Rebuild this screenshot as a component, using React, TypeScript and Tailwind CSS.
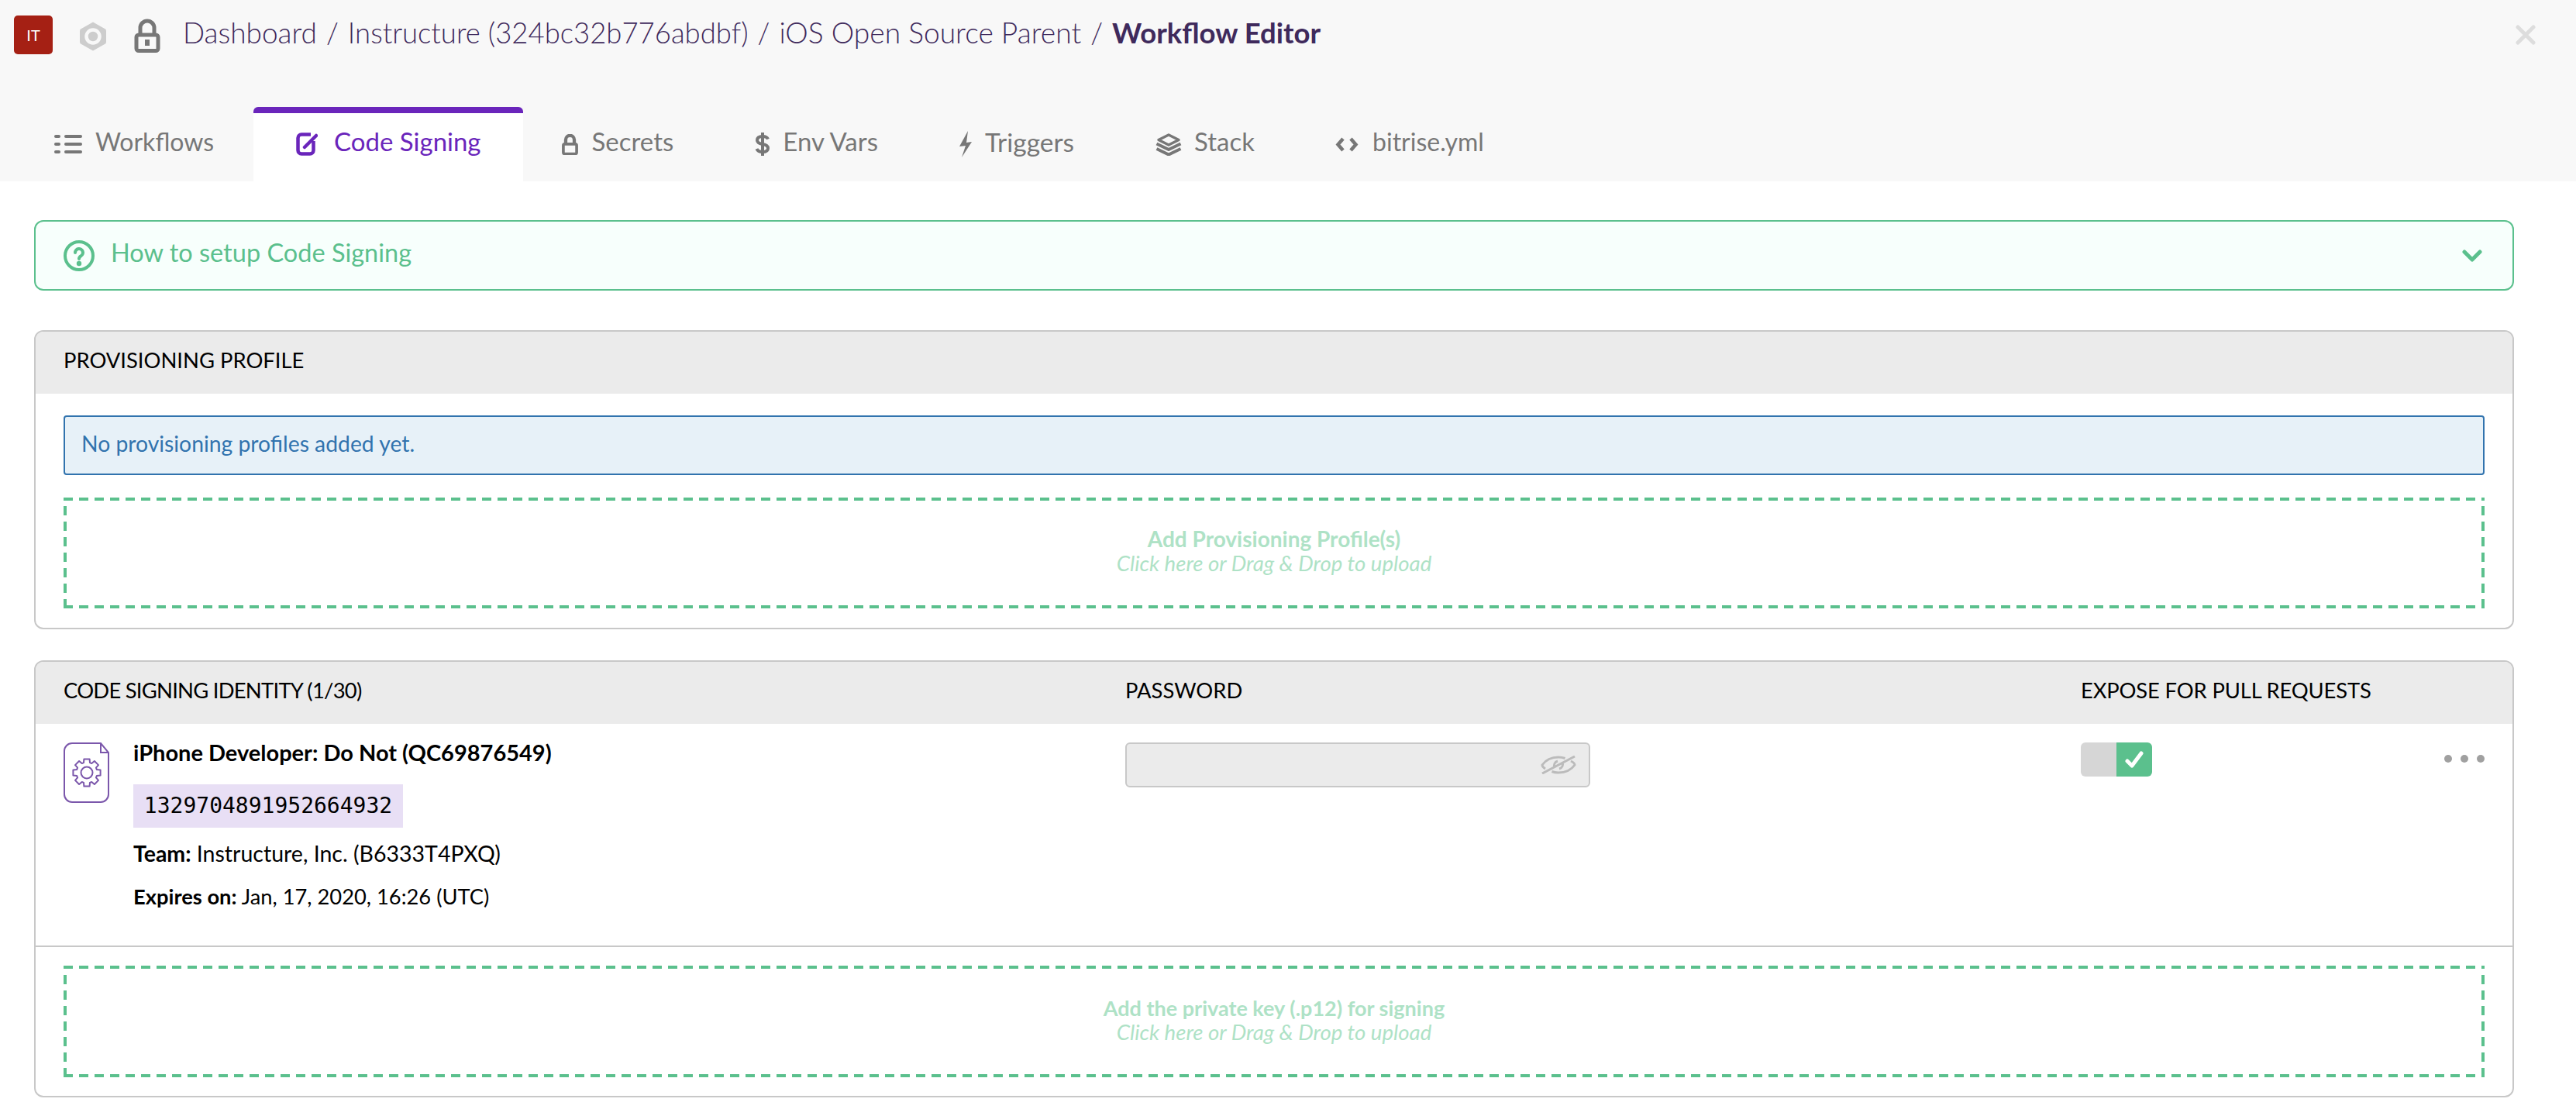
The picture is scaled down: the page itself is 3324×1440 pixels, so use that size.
import type { ReactNode } from "react";

const GREEN = "#5bc08d";

// gear outline for the certificate file icon
const GEAR = Array.from({ length: 8 }, (_, i) => {
  const a = (i / 8) * Math.PI * 2;
  const pt = (r: number, o: number) =>
    `${(30 + r * Math.cos(a + o)).toFixed(1)},${(39 + r * Math.sin(a + o)).toFixed(1)}`;
  return `${pt(13.5, -0.3)} ${pt(18, -0.2)} ${pt(18, 0.2)} ${pt(13.5, 0.3)}`;
}).join(" ");

function HexIcon() {
  return (
    <svg width="36" height="40" viewBox="0 0 36 40" className="ml-[34px]">
      <path d="M18 1.5 33 10a3 3 0 0 1 2 3v14a3 3 0 0 1-2 3l-15 8.500L3 30a3 3 0 0 1-2-3V13a3 3 0 0 1 2-3z" fill="#cdcdcd" />
      <circle cx="18" cy="20" r="8.500" fill="none" stroke="#f8f8f8" strokeWidth="4.500" />
    </svg>
  );
}

function LockIcon({ w, h, keyhole }: { w: number; h: number; keyhole?: boolean }) {
  return (
    <svg width={w} height={h} viewBox="0 0 34 44">
      <path d="M8 19v-7a9 9 0 0 1 18 0v7" fill="none" stroke="#777" strokeWidth={keyhole ? 5 : 7} />
      <rect x="3" y="21" width="28" height="20.500" rx="3" fill="none" stroke="#777" strokeWidth={keyhole ? 5 : 6} />
      {keyhole && <rect x="14" y="27" width="6" height="8" fill="#777" />}
    </svg>
  );
}

function ListIcon() {
  return (
    <svg width="36" height="24" viewBox="0 0 36 24" fill="#777">
      <rect x="0" y="0" width="8" height="4" rx="2" />
      <rect x="13" y="0" width="23" height="4" rx="2" />
      <rect x="0" y="10" width="8" height="4" rx="2" />
      <rect x="13" y="10" width="23" height="4" rx="2" />
      <rect x="0" y="20" width="8" height="4" rx="2" />
      <rect x="13" y="20" width="23" height="4" rx="2" />
    </svg>
  );
}

function SigningIcon() {
  return (
    <svg width="28" height="30" viewBox="0 0 28 30" fill="none" stroke="#6a25bb" strokeWidth="4.500">
      <path d="M19 2.500H7A4.500 4.500 0 0 0 2.500 7v16A4.500 4.500 0 0 0 7 27.500h11a4.500 4.500 0 0 0 4.500-4.500V11" />
      <path d="M11 19 26 4" strokeLinecap="round" />
    </svg>
  );
}

function DollarIcon() {
  return (
    <svg width="20" height="32" viewBox="0 0 20 32" fill="none" stroke="#777" strokeWidth="4">
      <path d="M17 9.500C16 7 13.500 6 10 6 6 6 3 7.500 3 11s3 4.300 7 5 7 1.800 7 5.200S14 26 10 26c-3.800 0-6.500-1.300-7.500-4" />
      <path d="M10 1v30" />
    </svg>
  );
}

function BoltIcon() {
  return (
    <svg width="16" height="34" viewBox="0 0 16 34" fill="#777">
      <path d="M11 0 0 20l8-1-5 15 13-20-7 1z" />
    </svg>
  );
}

function StackIcon() {
  return (
    <svg width="34" height="29" viewBox="0 0 34 29" fill="none" stroke="#777" strokeWidth="3.500" strokeLinejoin="round">
      <path d="M17 2 30 8.500 17 15 4 8.500z" />
      <path d="M1.500 13.500 17 21l15.500-7.500" strokeWidth="4" />
      <path d="M1.500 20 17 27.500 32.500 20" strokeWidth="4" />
    </svg>
  );
}

function CodeIcon() {
  return (
    <svg width="30" height="19" viewBox="0 0 30 19" fill="none" stroke="#777" strokeWidth="4.500">
      <path d="M10 2 3.500 9.500 10 17" />
      <path d="M20 2l6.500 7.500L20 17" />
    </svg>
  );
}

const TABS: { label: string; icon: ReactNode; cls: string }[] = [
  { label: "Workflows", icon: <ListIcon />, cls: "gap-[17px] pl-[50px] pr-[51px] text-[32px]" },
  { label: "Code Signing", icon: <SigningIcon />, cls: "gap-[21px] pl-[55px] pr-[54px] text-[33px]" },
  { label: "Secrets", icon: <LockIcon w={21} h={27} />, cls: "gap-[18px] pl-[50px] pr-[50px] text-[33px]" },
  { label: "Env Vars", icon: <DollarIcon />, cls: "gap-[16px] pl-[55px] pr-[50px] text-[33px]" },
  { label: "Triggers", icon: <BoltIcon />, cls: "gap-[17px] pl-[55px] pr-[50px] text-[33.500px]" },
  { label: "Stack", icon: <StackIcon />, cls: "gap-[16px] pl-[55px] pr-[50px] text-[33px]" },
  { label: "bitrise.yml", icon: <CodeIcon />, cls: "gap-[18px] pl-[54px] pr-[50px] text-[32px]" },
];

function DropZone({ title, titleCls, className }: { title: string; titleCls: string; className: string }) {
  return (
    <div className={`flex flex-col items-center justify-center pb-[5px] text-[27.600px] leading-[31px] text-[#aee2c6] [background:repeating-linear-gradient(90deg,#5bc08d_0_12px,transparent_12px_20px)_top/100%_4px_no-repeat,repeating-linear-gradient(90deg,#5bc08d_0_12px,transparent_12px_20px)_bottom/100%_4px_no-repeat,repeating-linear-gradient(0deg,#5bc08d_0_12px,transparent_12px_20px)_left/4px_100%_no-repeat,repeating-linear-gradient(0deg,#5bc08d_0_12px,transparent_12px_20px)_right/4px_100%_no-repeat] ${className}`}>
      <p className={`font-bold ${titleCls}`}>{title}</p>
      <p className="italic">Click here or Drag &amp; Drop to upload</p>
    </div>
  );
}

export default function App() {
  return (
    <div className="min-h-[1440px] bg-white font-['Lato',sans-serif]">
      <header className="h-[234px] bg-[#f8f8f8]">
        <div className="flex h-[138px] items-start pl-[18px] pt-5">
          <div className="flex h-[50px] w-[50px] items-center justify-center rounded-[5px] bg-[#a52014] text-[20px] text-white">IT</div>
          <div className="mt-[7px]"><HexIcon /></div>
          <div className="ml-[35px] mt-1"><LockIcon w={34} h={44} keyhole /></div>
          <nav className="ml-[29px] flex gap-[12px] text-[36.500px] font-light leading-[44px] text-[#3f2a5c]">
            <span className="text-[37px]">Dashboard</span>
            <span>/</span>
            <span>Instructure (324bc32b776abdbf)</span>
            <span>/</span>
            <span className="text-[37.200px]">iOS Open Source Parent</span>
            <span>/</span>
            <span className="font-bold">Workflow Editor</span>
          </nav>
          <svg width="26" height="26" viewBox="0 0 26 26" className="ml-auto mr-[52px] mt-3" stroke="#ddd" strokeWidth="5" strokeLinecap="round">
            <path d="M3 3l20 20M23 3 3 23" />
          </svg>
        </div>
        <div className="flex h-24 pl-5">
          {TABS.map((t) =>
            t.label === "Code Signing" ? (
              <div key={t.label} className={`flex items-center rounded-t-[6px] border-t-8 border-[#6a25bb] bg-white pb-2 text-[#6a25bb] ${t.cls}`}>
                {t.icon}
                <span className="pb-[6px]">{t.label}</span>
              </div>
            ) : (
              <div key={t.label} className={`flex items-center text-[#777] ${t.cls}`}>
                {t.icon}
                <span className="pb-[6px]">{t.label}</span>
              </div>
            ),
          )}
        </div>
      </header>

      <main className="flex flex-col pl-[44px] pr-[80px] pt-[50px]">
        <div className="flex h-[91px] items-center rounded-[12px] border-2 border-[#5bc08d] bg-[#f7fffc] pl-[36px] pr-[39px]">
          <svg width="40" height="40" viewBox="0 0 40 40" fill="none" stroke={GREEN} strokeWidth="4">
            <circle cx="20" cy="20" r="18" />
            <path d="M15 16a5 5 0 1 1 7.500 4.300c-1.700 1-2.500 1.800-2.500 3.700" strokeLinecap="round" />
            <circle cx="20" cy="30" r="1.200" fill={GREEN} />
          </svg>
          <span className="ml-[21px] pb-[6px] text-[32.500px] text-[#5bc08d]">How to setup Code Signing</span>
          <svg width="26" height="16" viewBox="0 0 26 16" className="ml-auto" fill="none" stroke={GREEN} strokeWidth="5" strokeLinecap="round" strokeLinejoin="round">
            <path d="M3 3l10 10L23 3" />
          </svg>
        </div>

        <section className="mt-[51px] overflow-hidden rounded-[12px] border-2 border-[#c8c8c8]">
          <div className="flex h-[80px] items-center bg-[#ebebeb] px-[36px] pb-[6px] text-[27.400px] text-black">PROVISIONING PROFILE</div>
          <div className="flex flex-col px-[36px] pb-[25px] pt-[28px]">
            <div className="flex h-[77px] items-center rounded-[4px] border-2 border-[#3173ae] bg-[#e7f1f8] pb-1 pl-[21px] text-[28.300px] text-[#3173ae]">
              No provisioning profiles added yet.
            </div>
            <DropZone title="Add Provisioning Profile(s)" titleCls="text-[28px]" className="mt-[29px] h-[143px]" />
          </div>
        </section>

        <section className="mt-[40px] overflow-hidden rounded-[12px] border-2 border-[#c8c8c8]">
          <div className="grid h-[80px] grid-cols-[1370px_1233px_1fr] items-center bg-[#ebebeb] px-[36px] pb-[6px] text-[27.400px] text-black">
            <span className="tracking-[-0.75px]">CODE SIGNING IDENTITY (1/30)</span>
            <span>PASSWORD</span>
            <span className="tracking-[-0.15px]">EXPOSE FOR PULL REQUESTS</span>
          </div>
          <div className="grid h-[288px] grid-cols-[1370px_1233px_1fr] border-b-2 border-[#c8c8c8] px-[36px] pt-6">
            <div className="flex items-start gap-[31px]">
              <svg width="59" height="78" viewBox="0 0 59 78" fill="none" stroke="#7b57ab" strokeWidth="2">
                <path d="M48 1H11A10 10 0 0 0 1 11v56a10 10 0 0 0 10 10h37a10 10 0 0 0 10-10V13z" />
                <path d="M48 1v12h10" />
                <polygon points={GEAR} strokeLinejoin="round" />
                <circle cx="30" cy="39" r="7.500" />
              </svg>
              <div className="flex flex-col text-[28px] text-black">
                <p className="mt-[-2px] text-[29px] font-bold leading-[30px]">iPhone Developer: Do Not (QC69876549)</p>
                <code className="mt-[26px] flex h-[56px] w-[348px] items-center justify-center bg-[#e8dff5] font-['DejaVu_Sans_Mono',monospace] text-[28px]">1329704891952664932</code>
                <p className="mt-[18px] text-[28.500px] leading-[30px]"><b>Team:</b> Instructure, Inc. (B6333T4PXQ)</p>
                <p className="mt-[26px] text-[27.300px] leading-[30px]"><b>Expires on:</b> Jan, 17, 2020, 16:26 (UTC)</p>
              </div>
            </div>
            <div>
              <div className="flex h-[58px] w-[600px] items-center justify-end rounded-[6px] border-2 border-[#c8c8c8] bg-[#ebebeb] pr-4">
                <svg width="46" height="24" viewBox="0 0 46 24" fill="none" stroke="#bbb" strokeWidth="3">
                  <path d="M6 17C3.500 15.500 2 14 2 12 7 5 14 2 23 2c3 0 6 .500 8.500 1.500M39 7c3 1.500 5 3.500 5 5-5 7-12 10-21 10-3 0-6-.500-8.500-1.500" />
                  <path d="M18 15c-1.500-3 0-7 4-8M28 9c1.500 3 0 7-4 8" />
                  <path d="M2 23 44 1" />
                </svg>
              </div>
            </div>
            <div className="flex items-start justify-between">
              <div className="flex h-[44px] w-[92px] overflow-hidden rounded-[6px]">
                <div className="w-[46px] bg-[#d6d6d6]" />
                <div className="flex w-[46px] items-center justify-center bg-[#5bc08d]">
                  <svg width="24" height="22" viewBox="0 0 24 22" fill="none" stroke="#fff" strokeWidth="5" strokeLinecap="round" strokeLinejoin="round">
                    <path d="M3 13l6 6L21 3" />
                  </svg>
                </div>
              </div>
              <div className="mt-4 flex gap-[11px]">
                <span className="h-[10px] w-[10px] rounded-full bg-[#a0a0a0]" />
                <span className="h-[10px] w-[10px] rounded-full bg-[#a0a0a0]" />
                <span className="h-[10px] w-[10px] rounded-full bg-[#a0a0a0]" />
              </div>
            </div>
          </div>
          <div className="px-[36px] py-6">
            <DropZone title="Add the private key (.p12) for signing" titleCls="text-[27px]" className="h-[144px]" />
          </div>
        </section>
      </main>
    </div>
  );
}
